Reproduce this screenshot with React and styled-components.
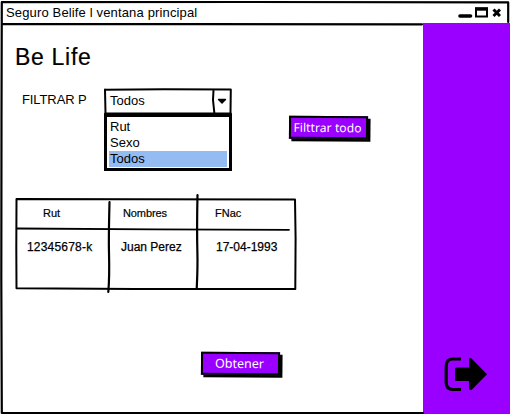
import React from "react";
import styled, { createGlobalStyle } from "styled-components";

const GlobalStyle = createGlobalStyle`
  *, *::before, *::after { box-sizing: border-box; }
  body { margin: 0; background: #fff; color: #000; }
`;

const PURPLE = "#9900ff";

const Window = styled.div`
  position: relative;
  display: grid;
  grid-template-rows: 23px 1fr;
  width: 510px;
  height: 415px;
  overflow: hidden;
  background: #fff;
`;

const Sketch = styled.svg`
  position: absolute;
  inset: 0;
  width: 100%;
  height: 100%;
  overflow: visible;
  pointer-events: none;
  fill: none;
  stroke: #000;
  stroke-width: ${(p) => p.$weight || 2};
  stroke-linecap: round;
  stroke-linejoin: round;
`;

const Text = styled.span`
  display: block;
  font-family: ${(p) => p.$font || "'Liberation Sans'"}, sans-serif;
  font-size: ${(p) => p.$size || 13}px;
  letter-spacing: ${(p) => p.$track || 0}px;
  line-height: 16px;
  white-space: pre;
  -webkit-text-stroke: ${(p) => p.$stroke || 0}px currentColor;
`;

const TitleBar = styled.header`
  display: flex;
  align-items: flex-start;
  justify-content: space-between;
  padding: 5px 9px 0 6px;
`;

const Body = styled.div`
  display: grid;
  grid-template-columns: 423px 1fr;
`;

const Main = styled.main`
  display: flex;
  flex-direction: column;
  align-items: flex-start;
  padding: 25px 0 0 15px;
`;

const Heading = styled.h1`
  margin: 0;
  height: 40px;
  font: 400 23px/18px "Liberation Sans", sans-serif;
  letter-spacing: 0.7px;
  -webkit-text-stroke: 0.2px currentColor;
`;

const Filters = styled.section`
  display: grid;
  grid-template-columns: 89px 128px 1fr;
  width: 100%;
  height: 110px;
`;

const FilterLabel = styled.div`
  padding: 4px 0 0 7px;
`;

const Dropdown = styled.div`
  display: flex;
  flex-direction: column;
`;

const SelectBox = styled.div`
  position: relative;
  height: 26px;
  padding: 5px 0 0 6px;
`;

const Options = styled.ul`
  margin: 0;
  padding: 2px 2px 1px;
  height: 57px;
  border: 3px solid #000;
  list-style: none;
`;

const Option = styled.li`
  height: 16px;
  padding-left: 1px;
  background: ${(p) => (p.$selected ? "#94bbf2" : "transparent")};
`;

const FilterAction = styled.div`
  padding: 28px 0 0 57px;
`;

const Button = styled.button`
  display: flex;
  align-items: center;
  justify-content: center;
  width: 79px;
  height: 23px;
  padding: 0 2px 0 0;
  border: 2px solid #000;
  background: ${PURPLE};
  color: #fff;
  box-shadow: 2.5px 2.5px #000;
  transform: rotate(0.5deg);
`;

const Table = styled.div`
  position: relative;
  display: grid;
  grid-template-columns: 94px 88px 99px;
  grid-template-rows: 30px 61px;
  width: 281px;
  height: 91px;
`;

const Cell = styled.div`
  padding: ${(p) => (p.$header ? 7 : 11)}px 0 0 ${(p) => p.$inset}px;
`;

const Footer = styled.footer`
  padding: 63px 0 0 186px;
`;

const Sidebar = styled.aside`
  display: flex;
  align-items: flex-end;
  padding: 0 0 22px 21px;
  margin-bottom: 1px;
  background: ${PURPLE};
`;

const headers = [
  { text: "Rut", inset: 28, track: 0 },
  { text: "Nombres", inset: 14, track: -0.1 },
  { text: "FNac", inset: 18, track: 0 },
];
const values = [
  { text: "12345678-k", inset: 12, track: 0.2 },
  { text: "Juan Perez", inset: 12, track: 0 },
  { text: "17-04-1993", inset: 19, track: 0 },
];
const options = ["Rut", "Sexo", "Todos"];

export default function App() {
  return (
    <>
      <GlobalStyle />
      <Window>
        <TitleBar>
          <Text $track={0.15}>Seguro Belife l ventana principal</Text>
          <svg width="43" height="15" viewBox="0 0 43 15">
            <path d="M2 11H12.5" stroke="#000" strokeWidth="3.6" strokeLinecap="round" />
            <path d="M18 3.5H29V11.5H18Z" fill="#fff" stroke="#000" strokeWidth="2" />
            <path d="M17 4H30" stroke="#000" strokeWidth="3.4" />
            <path d="M35.5 4.5L42 11M42 4.5L35.5 11" stroke="#000" strokeWidth="3" />
          </svg>
        </TitleBar>
        <Body>
          <Main>
            <Heading>Be Life</Heading>
            <Filters>
              <FilterLabel>
                <Text $track={-0.1}>FILTRAR P</Text>
              </FilterLabel>
              <Dropdown>
                <SelectBox>
                  <Sketch viewBox="0 0 128 26">
                    <path d="M1 1.8L60 1.3L126.8 1.6L126.5 25M1 1.5L1.5 25.5M109.5 2L109 12L110.3 24.5M1 25.5H127" />
                    <path d="M114.5 11.5H121.5L118 15Z" fill="#000" strokeWidth="1.4" />
                  </Sketch>
                  <Text>Todos</Text>
                </SelectBox>
                <Options>
                  {options.map((o) => (
                    <Option key={o} $selected={o === "Todos"}>
                      <Text>{o}</Text>
                    </Option>
                  ))}
                </Options>
              </Dropdown>
              <FilterAction>
                <Button>
                  <Text $font="'Noto Sans'" $size={12} $track={0.1}>Filttrar todo</Text>
                </Button>
              </FilterAction>
            </Filters>
            <Table>
              <Sketch viewBox="0 0 281 91">
                <path d="M1.5 1L120 1.3L280 1.5L280.6 40L280.3 91L120 91L1.5 90.3L1.3 50Z" />
                <path d="M2 30.5L140 31.3L274 31.8" strokeWidth="1.8" />
                <path d="M94.5 4C94 25 93.6 40 94 55S94.5 80 93.3 94M182.5 -3C182 20 182 40 182.4 55S182.2 80 181.7 91" strokeWidth="2.2" />
              </Sketch>
              {headers.map((c) => (
                <Cell key={c.text} $header $inset={c.inset}>
                  <Text $size={11} $track={c.track} $stroke={0.2}>{c.text}</Text>
                </Cell>
              ))}
              {values.map((c) => (
                <Cell key={c.text} $inset={c.inset}>
                  <Text $size={12} $track={c.track} $stroke={0.25}>{c.text}</Text>
                </Cell>
              ))}
            </Table>
            <Footer>
              <Button>
                <Text $font="'Noto Sans'" $size={12.5}>Obtener</Text>
              </Button>
            </Footer>
          </Main>
          <Sidebar>
            <svg width="44" height="36" viewBox="0 0 44 36">
              <path d="M17 3H9Q2.2 3 2.2 10V26.5Q2.2 33.5 9 33.5H17" fill="none" stroke="#000" strokeWidth="3.2" />
              <path d="M12 11.5H25V3.2Q25.5 1 28 3L43 18.2L28 33.4Q25.5 35 25 33V25H12Q11 25 11 24V13Q11 11.5 12 11.5Z" fill="#000" />
            </svg>
          </Sidebar>
        </Body>
        <Sketch viewBox="0 0 510 415" $weight={2.2}>
          <path d="M1.8 2.2L250 2L508.2 2.4V22M1.8 2.5L1.5 120L1.3 280L1.8 413L423 413M2 24L200 24.2L422 24.3" />
        </Sketch>
      </Window>
    </>
  );
}
